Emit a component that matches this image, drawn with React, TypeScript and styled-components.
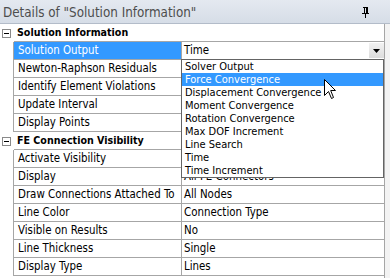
import React from "react";
import styled, { createGlobalStyle } from "styled-components";

const Global = createGlobalStyle`
  html, body { margin: 0; padding: 0; background: #f3f3f3; }
  body { width: 390px; height: 278px; overflow: hidden; }
`;

const FONT = `"DejaVu Sans Condensed", "Liberation Sans", sans-serif`;
const LINE = "#a6a6a6";

const Panel = styled.div`
  width: 390px;
  height: 278px;
  display: flex;
  flex-direction: column;
  font-family: ${FONT};
  font-size: 11.4px;
  color: #000;
  overflow: hidden;
`;

const TitleBar = styled.div`
  height: 22px;
  flex: 0 0 auto;
  display: flex;
  align-items: center;
  justify-content: space-between;
  padding: 1px 20px 0 3px;
  box-sizing: content-box;
  background: linear-gradient(#e4e9f0, #d6dde7);
  border-bottom: 1px solid #b3bcc9;
  color: #4d4d4d;
  font-size: 13.3px;
`;

const Table = styled.div`
  width: 384px;
  flex: 1;
  background: #fff;
  border-right: 1px solid ${LINE};
  display: flex;
  flex-direction: column;
`;

const Row = styled.div`
  display: flex;
  height: 18px;
  flex: 0 0 18px;
`;

const Gutter = styled.div<{ $line?: boolean }>`
  width: 12px;
  flex: 0 0 12px;
  border-right: 1px solid ${(p) => (p.$line ? LINE : "transparent")};
  display: flex;
  align-items: center;
  justify-content: flex-end;
  padding-right: 1px;
  box-sizing: content-box;
`;

const ExpandBox = styled.div`
  width: 7px;
  height: 7px;
  border: 1px solid #8a8a8a;
  background: #fff;
  position: relative;
  margin-right: 1px;
  &::after {
    content: "";
    position: absolute;
    left: 1px;
    right: 1px;
    top: 3px;
    height: 1px;
    background: #000;
  }
`;

const CategoryLabel = styled.div`
  flex: 1;
  border-bottom: 1px solid ${LINE};
  font-weight: bold;
  font-size: 10.6px;
  line-height: 17px;
  padding-left: 3px;
  white-space: nowrap;
`;

const NameCell = styled.div<{ $selected?: boolean }>`
  width: 163px;
  flex: 0 0 163px;
  padding-left: 4px;
  line-height: 17px;
  border-bottom: 1px solid ${LINE};
  border-right: 1px solid ${LINE};
  background: ${(p) => (p.$selected ? "#3399ff" : "#fff")};
  color: ${(p) => (p.$selected ? "#fff" : "#000")};
  white-space: nowrap;
  overflow: hidden;
`;

const ValueCell = styled.div`
  flex: 1;
  position: relative;
  padding-left: 2px;
  line-height: 17px;
  border-bottom: 1px solid ${LINE};
  white-space: nowrap;
`;

const ComboText = styled.span`
  display: block;
`;

const ArrowButton = styled.div`
  position: absolute;
  right: 0px;
  top: 1px;
  width: 15px;
  height: 15px;
  background: linear-gradient(#f2f2f2, #dcdcdc);
  display: flex;
  align-items: center;
  justify-content: center;
`;

const DropList = styled.div`
  position: absolute;
  left: -1px;
  top: 17px;
  width: 201px;
  border: 1px solid #646464;
  background: #fff;
  z-index: 5;
  font-size: 11px;
`;

const DropItem = styled.div<{ $active?: boolean }>`
  height: 13px;
  line-height: 13px;
  padding-left: 3px;
  background: ${(p) => (p.$active ? "#3399ff" : "#fff")};
  color: ${(p) => (p.$active ? "#fff" : "#000")};
  white-space: nowrap;
`;

const Cursor = styled.svg`
  position: absolute;
  left: 142px;
  top: 37px;
  z-index: 10;
`;

type Prop = { name: string; value: string; selected?: boolean; combo?: boolean };
type Section = { title: string; props: Prop[] };

const sections: Section[] = [
  {
    title: "Solution Information",
    props: [
      { name: "Solution Output", value: "Time", selected: true, combo: true },
      { name: "Newton-Raphson Residuals", value: "0" },
      { name: "Identify Element Violations", value: "0" },
      { name: "Update Interval", value: "2.5 s" },
      { name: "Display Points", value: "All" },
    ],
  },
  {
    title: "FE Connection Visibility",
    props: [
      { name: "Activate Visibility", value: "Yes" },
      { name: "Display", value: "All FE Connectors" },
      { name: "Draw Connections Attached To", value: "All Nodes" },
      { name: "Line Color", value: "Connection Type" },
      { name: "Visible on Results", value: "No" },
      { name: "Line Thickness", value: "Single" },
      { name: "Display Type", value: "Lines" },
    ],
  },
];

const options = [
  "Solver Output",
  "Force Convergence",
  "Displacement Convergence",
  "Moment Convergence",
  "Rotation Convergence",
  "Max DOF Increment",
  "Line Search",
  "Time",
  "Time Increment",
];

const PinIcon = () => (
  <svg width="9" height="11" viewBox="0 0 9 11">
    <rect x="2" y="0" width="5" height="1" fill="#000" />
    <rect x="3" y="1" width="1" height="5" fill="#000" />
    <rect x="5" y="1" width="2" height="5" fill="#000" />
    <rect x="1" y="6" width="7" height="1" fill="#000" />
    <rect x="4" y="7" width="1" height="4" fill="#000" />
  </svg>
);

export default function App() {
  return (
    <>
      <Global />
      <Panel>
        <TitleBar>
          <span>Details of "Solution Information"</span>
          <PinIcon />
        </TitleBar>
        <Table>
          {sections.map((s) => (
            <React.Fragment key={s.title}>
              <Row>
                <Gutter>
                  <ExpandBox />
                </Gutter>
                <CategoryLabel>{s.title}</CategoryLabel>
              </Row>
              {s.props.map((p) => (
                <Row key={p.name}>
                  <Gutter $line />
                  <NameCell $selected={p.selected}>{p.name}</NameCell>
                  <ValueCell>
                    {p.combo ? (
                      <>
                        <ComboText>{p.value}</ComboText>
                        <ArrowButton>
                          <svg width="7" height="4" viewBox="0 0 7 4">
                            <path d="M0 0 H7 L3.5 4 Z" fill="#000" />
                          </svg>
                        </ArrowButton>
                        <DropList>
                          {options.map((o) => (
                            <DropItem key={o} $active={o === "Force Convergence"}>
                              {o}
                            </DropItem>
                          ))}
                        </DropList>
                        <Cursor width="13" height="21" viewBox="0 0 13 21">
                          <path
                            d="M0.5 0.5 L0.5 16.5 L4.5 12.5 L7.5 19.5 L9.5 18.5 L6.7 11.5 L11.5 11.5 Z"
                            fill="#fff"
                            stroke="#000"
                            strokeWidth="1"
                          />
                        </Cursor>
                      </>
                    ) : (
                      p.value
                    )}
                  </ValueCell>
                </Row>
              ))}
            </React.Fragment>
          ))}
        </Table>
      </Panel>
    </>
  );
}
